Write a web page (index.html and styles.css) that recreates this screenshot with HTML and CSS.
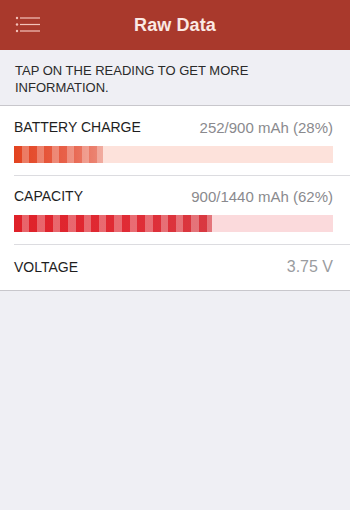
FILE: index.html
```html
<!DOCTYPE html>
<html>
<head>
<meta charset="utf-8">
<link rel="stylesheet" href="styles.css">
</head>
<body>
<header class="nav">
  <svg class="menu" width="26" height="18" viewBox="0 0 26 18">
    <circle cx="2" cy="2" r="1.2" fill="#f3c2b9"/>
    <circle cx="2" cy="8.5" r="1.2" fill="#f3c2b9"/>
    <circle cx="2" cy="15" r="1.2" fill="#f3c2b9"/>
    <rect x="5" y="1.4" width="20" height="1.2" fill="#f3c2b9"/>
    <rect x="5" y="7.9" width="20" height="1.2" fill="#f3c2b9"/>
    <rect x="5" y="14.4" width="20" height="1.2" fill="#f3c2b9"/>
  </svg>
  <h1 class="title">Raw Data</h1>
</header>
<section class="info">TAP ON THE READING TO GET MORE<br>INFORMATION.</section>
<ul class="list">
  <li class="row">
    <div class="line"><span class="label">BATTERY CHARGE</span><span class="value">252/900 mAh (28%)</span></div>
    <div class="track track-charge"><div class="fill fill-charge" style="width:28%"></div></div>
  </li>
  <li class="row">
    <div class="line"><span class="label">CAPACITY</span><span class="value">900/1440 mAh (62%)</span></div>
    <div class="track track-cap"><div class="fill fill-cap" style="width:62%"></div></div>
  </li>
  <li class="row row-simple">
    <div class="line"><span class="label">VOLTAGE</span><span class="value">3.75 V</span></div>
  </li>
</ul>
</body>
</html>
```
FILE: styles.css
```css
* { box-sizing: border-box; }
html, body { margin: 0; padding: 0; }
body {
  background: #efeff4;
  font-family: "Liberation Sans", Arial, sans-serif;
  width: 350px;
  min-height: 510px;
}
.nav {
  height: 50px;
  background: #a9392c;
  display: flex;
  align-items: center;
  justify-content: center;
  position: relative;
}
.menu {
  position: absolute;
  left: 15px;
  top: 16px;
}
.title {
  margin: 0;
  font-size: 18px;
  font-weight: bold;
  color: #fbe9e4;
  letter-spacing: 0.1px;
}
.info {
  padding: 12px 15px 9px;
  font-size: 13px;
  line-height: 17px;
  color: #2a2a2a;
  border-bottom: 1px solid #c8c7cc;
}
.list {
  list-style: none;
  margin: 0;
  padding: 0 0 0 14px;
  background: #fff;
  border-bottom: 1px solid #c8c7cc;
}
.row {
  padding: 12px 17px 12px 0;
  border-bottom: 1px solid #dcdce0;
}
.row:nth-child(2) { padding-top: 11px; }
.row-simple {
  border-bottom: none;
  padding-top: 13px;
  padding-bottom: 14px;
}
.line {
  display: flex;
  justify-content: space-between;
  align-items: center;
  height: 18px;
  font-size: 14px;
}
.label { color: #1e1e1e; }
.value { color: #8a8a8e; font-size: 15px; }
.row-simple .value { color: #9a9ca0; font-size: 16px; }
.track {
  margin-top: 10px;
  height: 17px;
}
.track-charge { background: #fde2db; }
.track-cap { background: #fbdadc; }
.fill { height: 100%; }
.fill-charge {
  background:
    repeating-linear-gradient(90deg, rgba(255,255,255,0) 0 8px, rgba(255,255,255,0.28) 8px 15px),
    linear-gradient(90deg, #e3431f, #e8624b 60%, #ec8b7a);
}
.fill-cap {
  background:
    repeating-linear-gradient(90deg, rgba(255,255,255,0) 0 8px, rgba(255,255,255,0.3) 8px 15.4px),
    linear-gradient(90deg, #df2129, #e02c36 60%, #d83a42);
}
```
